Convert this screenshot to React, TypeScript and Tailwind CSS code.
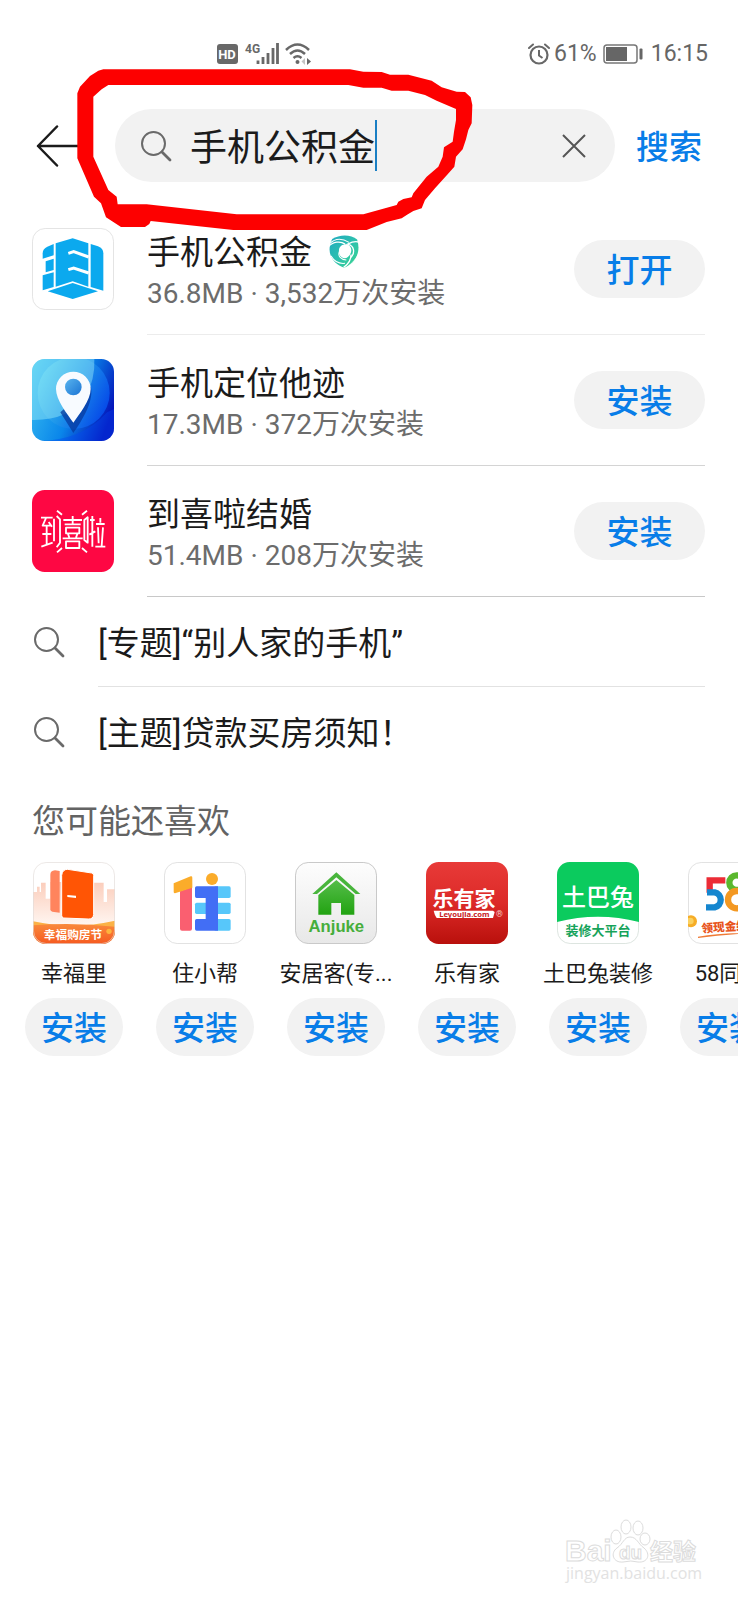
import React, { useState } from "react";

const suggestions = ["[专题]“别人家的手机”", "[主题]贷款买房须知！"];

const SearchIcon = () => (
  <svg viewBox="0 0 32 32" className="size-8 shrink-0" fill="none" stroke="#6a6a6a" aria-hidden="true">
    <circle cx="13.500" cy="13.500" r="11.500" strokeWidth="2" />
    <path d="M22 22L30 30" strokeWidth="2.800" strokeLinecap="round" />
  </svg>
);

const FundIcon = () => (
  <svg viewBox="0 0 246 246" className="size-full" aria-hidden="true">
    <rect x="1.5" y="1.5" width="243" height="243" rx="38" fill="#fff" stroke="#e4e4e4" strokeWidth="3" />
    <g fill="#0ba9ee">
      <path d="M32 76Q32 62 46 56L65 48V82L32 92Z" />
      <path d="M41 100L65 92V126L41 133Z" />
      <path d="M32 142L65 133V177L32 187Z" />
      <path d="M71 46L122 31L169 46V176L122 160L71 176Z" />
      <path d="M176 48L198 55Q214 61 214 76V188L176 177Z" />
      <path d="M47 190L122 165L198 190L122 213Z" />
    </g>
    <g fill="none" stroke="#fff" strokeWidth="9">
      <path d="M109 76L125 71L170 87" />
      <path d="M109 125L125 120L170 135" />
    </g>
  </svg>
);

const LocateIcon = () => (
  <svg viewBox="0 0 246 246" className="size-full" aria-hidden="true">
    <defs>
      <linearGradient id="locBg" x1="0" y1="0.2" x2="1" y2="0.6">
        <stop offset="0" stopColor="#38bdf0" />
        <stop offset="0.55" stopColor="#0a86ea" />
        <stop offset="1" stopColor="#0412b8" />
      </linearGradient>
      <linearGradient id="locDisc" x1="0" y1="0.2" x2="1" y2="0.7">
        <stop offset="0" stopColor="#52cdf0" />
        <stop offset="0.5" stopColor="#1c94ea" />
        <stop offset="1" stopColor="#0546e8" />
      </linearGradient>
      <linearGradient id="locDot" x1="0" y1="0" x2="1" y2="1">
        <stop offset="0" stopColor="#58b4ee" />
        <stop offset="1" stopColor="#1c74d4" />
      </linearGradient>
      <clipPath id="locClip"><rect width="246" height="246" rx="38" /></clipPath>
    </defs>
    <g clipPath="url(#locClip)">
      <rect width="246" height="246" fill="url(#locBg)" />
      <circle cx="125" cy="102" r="108" fill="url(#locDisc)" />
      <path d="M0 0H187Q190 60 160 115Q110 185 0 183Z" fill="#a4f3fb" opacity="0.42" />
      <path d="M20 246Q150 245 225 160L246 150V246Z" fill="#0646f0" opacity="0.4" />
      <path d="M124 222L85 160L165 90Q178 75 178 95C180 140 142 196 124 222Z" fill="#073a9e" opacity="0.75" />
      <path d="M124 191C106 165 72 124 72 90A52 52 0 01176 90C176 124 142 165 124 191Z" fill="#f8fbff" />
      <circle cx="124" cy="84" r="25" fill="url(#locDot)" />
    </g>
  </svg>
);

const WeddingIcon = () => (
  <svg viewBox="0 0 246 246" className="size-full" aria-hidden="true">
    <rect width="246" height="246" rx="38" fill="#fe0743" />
    <g fill="none" stroke="#fff" strokeWidth="5.5" strokeLinejoin="round">
      <path d="M27 83H62M42 84L32 107H56M50 96L60 110M44 109V165M31 132H58M28 170L62 158" />
      <path d="M66 86V154M74 78L84 88V158L74 172" />
      <path d="M94 90H150M122 78V103M98 103H146M102 113H142V130H102ZM108 132L112 143M136 132L132 143M92 145H152M102 154H142V174H102Z" />
      <path d="M157 90L167 82V158L157 150ZM174 90H188M181 78V170M172 134L190 124M192 102H218M205 84V98M198 112L200 160M213 112L209 168M190 170H220" />
      <path d="M75 62L90 74M165 62L150 74M75 187L90 174M165 187L150 174" />
    </g>
  </svg>
);

const HappinessIcon = () => (
  <svg viewBox="0 0 246 246" className="size-full" aria-hidden="true">
    <defs>
      <clipPath id="hapClip"><rect width="246" height="246" rx="38" /></clipPath>
      <linearGradient id="hapSky" x1="0" y1="0" x2="0" y2="1">
        <stop offset="0" stopColor="#fbcdbb" />
        <stop offset="1" stopColor="#fff6f1" />
      </linearGradient>
      <linearGradient id="hapBand" x1="0" y1="0" x2="0" y2="1">
        <stop offset="0" stopColor="#f98a3c" />
        <stop offset="1" stopColor="#f65a20" />
      </linearGradient>
    </defs>
    <g clipPath="url(#hapClip)">
      <rect width="246" height="246" fill="#fff" />
      <path d="M0 90H12V74H20V90H24V62H38V110H52V60H182V62H212V120H222V82H246V190H0Z" fill="url(#hapSky)" />
      <path d="M52 38Q52 26 66 25L80 27V152L58 149Q52 148 52 142Z" fill="#ff845d" />
      <path d="M86 40Q88 22 104 22L176 33Q182 34 182 40V158Q180 172 166 171L92 168Q86 167 86 160Z" fill="#ff5505" stroke="#fff" strokeWidth="3" />
      <path d="M103 99L129 101V108L103 105Z" fill="#fff" />
      <path d="M0 178Q120 204 246 176V246H0Z" fill="#fbb246" />
      <path d="M0 190Q120 180 246 194V246H0Z" fill="url(#hapBand)" />
      <circle cx="228" cy="208" r="8" fill="#fdb43d" />
    </g>
    <rect x="1.5" y="1.5" width="243" height="243" rx="38" fill="none" stroke="#e3ddda" strokeWidth="2" />
    <text x="120" y="230" textAnchor="middle" fontSize="35" fontWeight="700" fill="#fff">幸福购房节</text>
  </svg>
);

const ZhuIcon = () => (
  <svg viewBox="0 0 246 246" className="size-full" aria-hidden="true">
    <rect x="1.5" y="1.5" width="243" height="243" rx="38" fill="#fff" stroke="#e2e2e2" strokeWidth="3" />
    <path d="M48 88L84 74V200Q84 206 78 206H54Q48 206 48 200Z" fill="#fa5f70" />
    <path d="M29 64L80 43Q85 42 85 47V77L33 94Q29 94 29 90Z" fill="#fbac2a" />
    <rect x="93" y="122" width="107" height="34" rx="5" fill="#57c7fa" />
    <rect x="150" y="73" width="50" height="35" rx="5" fill="#57c7fa" />
    <rect x="150" y="171" width="50" height="35" rx="5" fill="#57c7fa" />
    <path d="M98 73H162V206H98Q93 206 93 201V176Q93 171 98 171H125V108H98Q93 108 93 103V78Q93 73 98 73Z" fill="#426ef5" />
    <circle cx="144" cy="51" r="18" fill="#fbac2a" />
  </svg>
);

const AnjukeIcon = () => (
  <svg viewBox="0 0 246 246" className="size-full" aria-hidden="true">
    <defs>
      <linearGradient id="ajBg" x1="0" y1="0" x2="0" y2="1">
        <stop offset="0" stopColor="#fdfdfd" />
        <stop offset="1" stopColor="#e8e8e8" />
      </linearGradient>
      <linearGradient id="ajHouse" x1="0" y1="0" x2="0" y2="1">
        <stop offset="0" stopColor="#55bd49" />
        <stop offset="1" stopColor="#22a312" />
      </linearGradient>
    </defs>
    <rect x="1.5" y="1.5" width="243" height="243" rx="38" fill="url(#ajBg)" stroke="#c9c9c9" strokeWidth="3" />
    <path d="M124 31L196 96H182L124 46L66 96H52Z" fill="#48b53c" />
    <path d="M124 54L178 99V158H138V123H109V158H70V99Z" fill="url(#ajHouse)" />
    <text x="124" y="209" textAnchor="middle" fontSize="50" fontWeight="700" fill="#46ae3b" fontFamily="Liberation Sans, sans-serif">Anjuke</text>
  </svg>
);

const LeyoujiaIcon = () => (
  <svg viewBox="0 0 246 246" className="size-full" aria-hidden="true">
    <defs>
      <linearGradient id="lyBg" x1="0" y1="0" x2="0" y2="1">
        <stop offset="0" stopColor="#e83a38" />
        <stop offset="0.5" stopColor="#dc2a28" />
        <stop offset="1" stopColor="#b9100c" />
      </linearGradient>
    </defs>
    <rect width="246" height="246" rx="38" fill="url(#lyBg)" />
    <text x="114" y="132" textAnchor="middle" fontSize="63" fontWeight="700" fill="#fff">乐有家</text>
    <path d="M23 146H201L206 150L201 168H32Q26 160 23 146Z" fill="#fff" />
    <text x="115" y="164" textAnchor="middle" fontSize="23" fontWeight="700" fill="#c8201e" fontFamily="Noto Sans, sans-serif">Leyoujia.com</text>
    <text x="220" y="166" textAnchor="middle" fontSize="26" fill="#f6c7c4">®</text>
  </svg>
);

const TubatuIcon = () => (
  <svg viewBox="0 0 246 246" className="size-full" aria-hidden="true">
    <defs>
      <clipPath id="tbClip"><rect width="246" height="246" rx="38" /></clipPath>
    </defs>
    <rect x="1.5" y="1.5" width="243" height="243" rx="38" fill="#fff" stroke="#dde5e0" strokeWidth="3" />
    <path d="M0 0H246V180Q123 148 0 180Z" fill="#0bcb5e" clipPath="url(#tbClip)" />
    <text x="123" y="131" textAnchor="middle" fontSize="72" fontWeight="500" fill="#fff">土巴兔</text>
    <text x="123" y="220" textAnchor="middle" fontSize="39" fontWeight="700" fill="#16a35a">装修大平台</text>
  </svg>
);

const City58Icon = () => (
  <svg viewBox="0 0 246 246" className="size-full" aria-hidden="true">
    <rect x="1.5" y="1.5" width="243" height="243" rx="38" fill="#fff" stroke="#e2e2e2" strokeWidth="3" />
    <g fill="none" strokeWidth="19">
      <circle cx="146" cy="62" r="22" stroke="#5ab82e" />
      <circle cx="146" cy="113" r="26" stroke="#f39822" />
      <path d="M112 55H65V92" stroke="#ec2c36" />
      <path d="M57 91H80A23 23 0 0180 136H54" stroke="#1586cf" />
    </g>
    <circle cx="9" cy="178" r="18" fill="#f6ad27" />
    <circle cx="7" cy="177" r="10" fill="#fbd160" />
    <text x="41" y="212" fontSize="35" fontWeight="900" fill="#e8541c" transform="rotate(-4 41 212)">领现金红包</text>
    <path d="M30 224Q110 212 210 212Q110 218 30 228Z" fill="#ef7a35" />
  </svg>
);

const apps = [
  { icon: FundIcon, name: "手机公积金", info: "36.8MB · 3,532万次安装", action: "打开", verified: true },
  { icon: LocateIcon, name: "手机定位他迹", info: "17.3MB · 372万次安装", action: "安装" },
  { icon: WeddingIcon, name: "到喜啦结婚", info: "51.4MB · 208万次安装", action: "安装" },
];

const recommended = [
  { icon: HappinessIcon, name: "幸福里" },
  { icon: ZhuIcon, name: "住小帮" },
  { icon: AnjukeIcon, name: "安居客(专..." },
  { icon: LeyoujiaIcon, name: "乐有家" },
  { icon: TubatuIcon, name: "土巴兔装修" },
  { icon: City58Icon, name: "58同城" },
];

const VerifiedBadge = () => (
  <svg viewBox="0 0 94 98" className="mb-1 h-[33px] w-8" role="img" aria-label="官方认证">
    <defs>
      <linearGradient id="badge" x1="0" y1="0" x2="1" y2="1">
        <stop offset="0" stopColor="#1fa9c0" />
        <stop offset="0.5" stopColor="#2cc0ae" />
        <stop offset="1" stopColor="#3ad68e" />
      </linearGradient>
    </defs>
    <path d="M12 12C34 -3 68 -2 86 13C98 50 82 84 48 97C12 86 -8 50 12 12Z" fill="url(#badge)" />
    <path d="M32 46C32 32 46 26 58 28C68 33 72 44 66 56C60 68 50 72 40 66C33 61 31 54 32 46Z" fill="#fff" />
    <g fill="none" stroke="#fff">
      <path d="M4 26C20 10 42 10 62 22" strokeWidth="3" />
      <path d="M0 36C14 18 38 18 50 27" strokeWidth="4" />
      <path d="M92 22C84 18 72 20 58 27C78 32 80 52 68 66" strokeWidth="4" />
      <path d="M96 40C90 62 78 78 60 92" strokeWidth="2" />
      <path d="M46 96C58 88 68 74 68 58" strokeWidth="4" />
      <path d="M8 62C18 78 34 86 50 84M33 50C28 62 38 74 54 74" strokeWidth="3" />
    </g>
  </svg>
);

const StatusBar = () => (
  <div className="flex h-[93px] items-start justify-between pl-[217px] pr-[30px] pt-10 text-[#666]">
    <div className="flex h-7 items-center">
      <svg viewBox="0 0 94 24" className="h-6 w-[94px]" fill="none" stroke="#686868" role="img" aria-label="HD 4G Wi-Fi">
        <rect x="0" y="2" width="21" height="20" rx="3" fill="#686868" stroke="none" />
        <text x="10" y="17" textAnchor="middle" fontSize="13" fontWeight="700" fill="#fff" stroke="none" fontFamily="Roboto, sans-serif">HD</text>
        <text x="28" y="11" fontSize="12" fontWeight="700" fill="#686868" stroke="none" fontFamily="Roboto, sans-serif">4G</text>
        <path d="M41 18.500V22M46 15V22M51 11V22M56 6V22M60.500 1V22" strokeWidth="2.800" />
        <path d="M69 8Q80.500 -3 92 8M73 12Q80.500 5 88 12M76.500 16Q80.500 12.500 84.500 16" strokeWidth="2.500" />
        <circle cx="80.500" cy="20" r="2" fill="#686868" stroke="none" />
        <path d="M90 16L94 19.500L90 23Z" fill="#686868" stroke="none" />
        <path d="M88 16L84.500 19.500L88 23Z" fill="#c4c4c4" stroke="none" />
      </svg>
    </div>
    <div className="flex h-7 items-center font-['Roboto',sans-serif] text-[23px]">
      <svg viewBox="0 0 22 22" className="mr-1 size-[22px]" fill="none" stroke="#686868" aria-hidden="true">
        <circle cx="11" cy="12" r="8.500" strokeWidth="2.200" />
        <path d="M11 7V12.500L14.500 15" strokeWidth="2" />
        <path d="M1 5L5 1.500M21 5L17 1.500" strokeWidth="2" strokeLinecap="round" />
      </svg>
      <span>61%</span>
      <svg viewBox="0 0 40 20" className="ml-1.5 mr-2 h-5 w-10" fill="none" aria-hidden="true">
        <rect x="1" y="1" width="33" height="18" rx="3" stroke="#777" strokeWidth="1.500" />
        <rect x="3" y="3" width="21" height="14" fill="#666" />
        <rect x="36.500" y="4.500" width="3" height="11" rx="1" fill="#666" />
      </svg>
      <span>16:15</span>
    </div>
  </div>
);

const InstallButton = ({ label, className }: { label: string; className: string }) => (
  <button className={`h-[58px] shrink-0 rounded-full bg-[#f2f2f2] pt-0.5 text-[33px] font-medium leading-none text-[#087de8] ${className}`}>
    {label}
  </button>
);

// freehand ring around the search keyword
const MarkerRing = () => (
  <svg
    viewBox="0 0 1380 540"
    className="pointer-events-none absolute left-5 top-[60px] h-[180px] w-[460px]"
    aria-hidden="true"
  >
    <path
      fill="#fd0000"
      fillRule="evenodd"
      d="M250 28H990L1030 35L1085 36L1110 44H1165L1235 62L1265 82L1310 95L1335 96L1352 112L1357 135L1355 190L1345 210L1338 238L1328 268L1308 290L1303 320L1283 343L1245 385L1215 420L1205 445L1180 453L1160 465L1145 475L1100 486L1040 510H640L392 483L388 492L375 501H303L258 472L243 430L222 410L172 295V100L180 80L210 48L235 32ZM265 75L245 88L220 110V290L265 390L290 410L293 433H380L650 463H1030L1095 445L1130 435L1135 425L1150 417L1175 412L1180 400L1220 350L1255 320L1268 290L1272 262L1298 245L1302 215L1308 180V147L1250 122L1215 105L1165 92H1115L1085 83H1030L985 75Z"
    />
  </svg>
);

const Watermark = () => (
  <svg
    viewBox="0 0 140 70"
    className="pointer-events-none absolute right-9 top-[1516px] h-[70px] w-[140px]"
    fill="#fff"
    stroke="#dcdcdc"
    strokeWidth="1"
    role="img"
    aria-label="Baidu 经验"
  >
    <text x="3" y="45" fontSize="30" fontWeight="700" fontFamily="Liberation Sans, sans-serif">Bai</text>
    <ellipse cx="54" cy="21" rx="5" ry="7" />
    <ellipse cx="64" cy="11" rx="5" ry="7" />
    <ellipse cx="76" cy="12" rx="5" ry="7" />
    <ellipse cx="83" cy="23" rx="5" ry="6" />
    <path d="M68 21C75 21 76 28 82 32C89 38 86 47 76 46Q69 44 61 46C51 47 48 37 55 32C61 28 62 21 68 21Z" />
    <text x="57" y="43" fontSize="19" fontWeight="700" fontFamily="Liberation Sans, sans-serif">du</text>
    <text x="88" y="44" fontSize="23" fontWeight="700">经验</text>
    <text x="4" y="63" fontSize="16" strokeWidth="0" fill="#e2e2e2" fontFamily="Open Sans, sans-serif">jingyan.baidu.com</text>
  </svg>
);

const App: React.FC = () => {
  const [query, setQuery] = useState("手机公积金");

  return (
    <div className="relative min-h-screen overflow-x-hidden bg-white pb-6 font-['Roboto','Noto_Sans_CJK_SC',sans-serif] text-[#1b1b1b]">
      <StatusBar />

      <header className="flex items-center pl-9 pr-9 pt-4">
        <button aria-label="返回" className="mr-[37px] shrink-0">
          <svg viewBox="0 0 42 42" className="size-[42px]" fill="none" stroke="#1b1b1b" strokeWidth="2.500" strokeLinecap="round" strokeLinejoin="round" aria-hidden="true">
            <path d="M21 1.500L2 21L21 40.500M2 21H42" />
          </svg>
        </button>
        <div className="flex h-[73px] min-w-0 flex-1 items-center rounded-full bg-[#f2f2f2] pl-[25px] pr-[29px]">
          <SearchIcon />
          <input
            aria-label="搜索应用"
            className="ml-[18px] field-sizing-content min-w-0 bg-transparent pt-1.5 text-[37px] leading-[50px] outline-none"
            value={query}
            onChange={(e) => setQuery(e.target.value)}
          />
          <span className="h-[51px] w-0.5 shrink-0 bg-[#1a7fc4]" aria-hidden="true" />
          <button aria-label="清除" className="ml-auto shrink-0" onClick={() => setQuery("")}>
            <svg viewBox="0 0 24 24" className="size-6" fill="none" stroke="#555" strokeWidth="2" aria-hidden="true">
              <path d="M1 1L23 23M23 1L1 23" />
            </svg>
          </button>
        </div>
        <button className="ml-[21px] shrink-0 pt-1 text-[33px] font-medium leading-[48px] text-[#087de8]">搜索</button>
      </header>

      <main>
        <ul className="pl-8 pr-[33px] pt-[22px]">
          {apps.map(({ icon: Icon, name, info, action, verified }, index) => (
            <li key={name} className="flex h-[131px]">
              <div className="mt-6 size-[82px] shrink-0">
                <Icon />
              </div>
              <div
                className={`ml-[33px] flex min-w-0 flex-1 items-start justify-between border-b ${
                  index === apps.length - 1 ? "border-[#c8c8c8]" : index === 1 ? "border-[#d4d4d4]" : "border-[#ececec]"
                }`}
              >
                <div className="pt-[26px]">
                  <div className="flex items-center gap-4">
                    <h2 className="text-[33px] leading-[46px]">{name}</h2>
                    {verified && <VerifiedBadge />}
                  </div>
                  <p className="text-[28px] leading-9 text-[#6c6c6c]">{info}</p>
                </div>
                <InstallButton label={action} className="mt-9 w-[131px]" />
              </div>
            </li>
          ))}
        </ul>

        <ul className="px-[33px]">
          {suggestions.map((text, index) => (
            <li key={text} className="flex h-[90px] items-center">
              <SearchIcon />
              <a
                href="#"
                className={`ml-[33px] flex h-full flex-1 items-center pt-1 text-[33px] leading-[46px] ${
                  index === 0 ? "border-b border-[#e2e2e2]" : ""
                }`}
              >
                {text}
              </a>
            </li>
          ))}
        </ul>

        <section>
          <h2 className="px-8 pt-[22px] text-[33px] leading-[46px] text-[#636363]">您可能还喜欢</h2>
          <ul className="flex gap-[33px] overflow-hidden pl-[25px] pt-[17px]">
            {recommended.map(({ icon: Icon, name }) => (
              <li key={name} className="flex w-[98px] shrink-0 flex-col items-center">
                <div className="size-[82px]">
                  <Icon />
                </div>
                <p className="mt-3.5 whitespace-nowrap text-[22px] leading-8">{name}</p>
                <InstallButton label="安装" className="mt-2 w-full" />
              </li>
            ))}
          </ul>
        </section>
      </main>

      <MarkerRing />
      <Watermark />
    </div>
  );
};

export default App;
